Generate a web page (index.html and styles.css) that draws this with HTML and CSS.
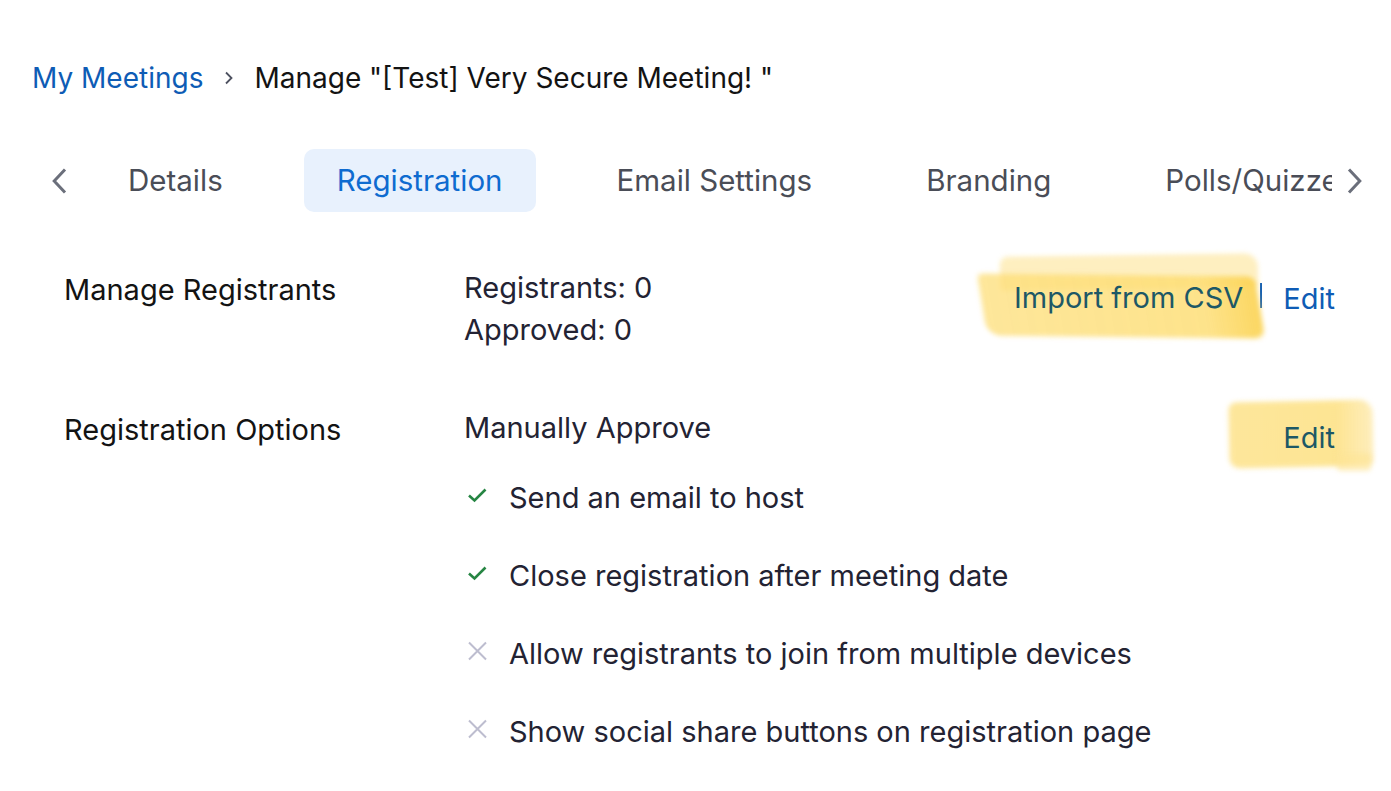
FILE: index.html
```html
<!DOCTYPE html>
<html>
<head>
<meta charset="utf-8">
<link rel="stylesheet" href="styles.css">
</head>
<body>
<div class="page">
  <nav class="crumbs">
    <a class="crumb-link">My Meetings</a>
    <svg class="crumb-sep" width="12" height="16" viewBox="0 0 12 16"><path d="M3 2.5l5.5 5.5-5.5 5.5" fill="none" stroke="#4d5160" stroke-width="1.8"/></svg>
    <span class="crumb-current">Manage "[Test] Very Secure Meeting! "</span>
  </nav>

  <div class="tabbar">
    <svg class="tab-arrow left" width="15" height="26" viewBox="0 0 15 26"><path d="M13 1.5L2.2 13 13 24.5" fill="none" stroke="#6b6f7b" stroke-width="3"/></svg>
    <div class="tabs">
      <div class="tab">Details</div>
      <div class="tab active">Registration</div>
      <div class="tab">Email Settings</div>
      <div class="tab">Branding</div>
      <div class="tab">Polls/Quizzes</div>
    </div>
    <svg class="tab-arrow right" width="15" height="26" viewBox="0 0 15 26"><path d="M2 1.5L12.8 13 2 24.5" fill="none" stroke="#6b6f7b" stroke-width="3"/></svg>
  </div>

  <section class="row row-first">
    <div class="label">Manage Registrants</div>
    <div class="content">
      <div class="stat">Registrants: 0</div>
      <div class="stat">Approved: 0</div>
    </div>
    <div class="actions">
      <span class="hl">
        <span class="mark mark-a1"></span>
        <span class="mark mark-a2"></span>
        <a class="action dark">Import from CSV</a>
      </span>
      <span class="divider"></span>
      <a class="action">Edit</a>
    </div>
  </section>

  <section class="row row-second">
    <div class="label">Registration Options</div>
    <div class="content">
      <div class="stat">Manually Approve</div>
      <ul class="checks">
        <li><svg class="ic" width="20" height="20" viewBox="0 0 20 20"><path d="M2 10.5l5.5 5L18.5 4.5" fill="none" stroke="#268543" stroke-width="2.6"/></svg>Send an email to host</li>
        <li><svg class="ic" width="20" height="20" viewBox="0 0 20 20"><path d="M2 10.5l5.5 5L18.5 4.5" fill="none" stroke="#268543" stroke-width="2.6"/></svg>Close registration after meeting date</li>
        <li><svg class="ic" width="20" height="20" viewBox="0 0 20 20"><path d="M2 1.5l17 17M19 1.5l-17 17" fill="none" stroke="#bdbdcf" stroke-width="2"/></svg>Allow registrants to join from multiple devices</li>
        <li><svg class="ic" width="20" height="20" viewBox="0 0 20 20"><path d="M2 1.5l17 17M19 1.5l-17 17" fill="none" stroke="#bdbdcf" stroke-width="2"/></svg>Show social share buttons on registration page</li>
      </ul>
    </div>
    <div class="actions">
      <span class="hl">
        <span class="mark mark-b1"></span>
        <span class="mark mark-b2"></span>
        <a class="action dark">Edit</a>
      </span>
    </div>
  </section>
</div>
</body>
</html>
```
FILE: styles.css
```css
html, body {
  margin: 0;
  padding: 0;
  background: #ffffff;
}
body {
  font-family: Inter, "Noto Sans", sans-serif;
  color: #232333;
  width: 1391px;
  height: 791px;
  overflow: hidden;
}
.page {
  padding: 0 56px 0 32px;
}
.crumbs {
  display: flex;
  align-items: center;
  height: 60px;
  margin-top: 48px;
  font-size: 28px;
}
.crumb-link {
  color: #0e5cb5;
}
.crumb-sep {
  margin: 0 19px 0 20px;
}
.crumb-current {
  color: #131313;
}
.tabbar {
  display: flex;
  align-items: center;
  margin-top: 41px;
  margin-left: 20px;
  margin-right: -40px;
}
.tab-arrow {
  flex: none;
}
.tabs {
  flex: none;
  display: flex;
  gap: 48px;
  width: 1237px;
  overflow: hidden;
  margin-left: 28px;
  margin-right: 15px;
  white-space: nowrap;
}
.tab {
  flex: none;
  height: 63px;
  line-height: 63px;
  padding: 0 33px;
  font-size: 29.5px;
  color: #4a4d57;
  border-radius: 10px;
}
.tab.active {
  background: #e8f1fd;
  color: #0e6bd0;
}
.row {
  display: grid;
  grid-template-columns: 400px 1fr auto;
  padding-left: 32px;
  font-size: 29px;
}
.row-first {
  margin-top: 55px;
}
.row-second {
  margin-top: 56px;
}
.label {
  line-height: 42px;
  padding-top: 2px;
  color: #131313;
}
.stat {
  line-height: 42px;
}
.actions {
  display: flex;
  align-items: center;
  align-self: start;
  margin-top: 10px;
  height: 42px;
}
.hl {
  position: relative;
  display: inline-block;
  line-height: 42px;
}
.action {
  position: relative;
  color: #0e5cb5;
}
.action.dark {
  color: #1d5866;
}
.divider {
  width: 2px;
  height: 25px;
  background: #0e5cb5;
  margin: -6px 21px 0 17px;
}
.mark {
  position: absolute;
  filter: blur(2.5px);
}
.mark-a1 {
  left: -14px;
  top: -22px;
  width: 258px;
  height: 34px;
  background: rgba(253, 226, 140, 0.55);
  border-radius: 8px 14px 4px 4px;
  transform: rotate(-0.8deg);
}
.mark-a2 {
  left: -32px;
  top: -2px;
  width: 278px;
  height: 62px;
  background: linear-gradient(90deg, rgba(253, 222, 120, 0.75), rgba(253, 220, 110, 0.8) 80%, rgba(251, 210, 80, 0.9));
  border-radius: 6px 8px 10px 14px;
  transform: rotate(0.6deg) skewX(10deg);
}
.mark-b1 {
  left: -54px;
  top: -16px;
  width: 144px;
  height: 66px;
  background: linear-gradient(90deg, rgba(253, 224, 130, 0.8), rgba(253, 222, 120, 0.8) 75%, rgba(253, 230, 160, 0.7));
  border-radius: 8px 14px 6px 10px;
  transform: rotate(-1.2deg);
}
.mark-b2 {
  left: 54px;
  top: 36px;
  width: 34px;
  height: 18px;
  background: rgba(253, 228, 150, 0.6);
  border-radius: 4px;
}
.checks {
  list-style: none;
  margin: 28px 0 0 0;
  padding: 0;
}
.checks li {
  display: flex;
  align-items: center;
  height: 40px;
  margin-bottom: 38px;
}
.ic {
  flex: none;
  margin: 0 22px 4px 3px;
  width: 20px;
  height: 20px;
}
```
